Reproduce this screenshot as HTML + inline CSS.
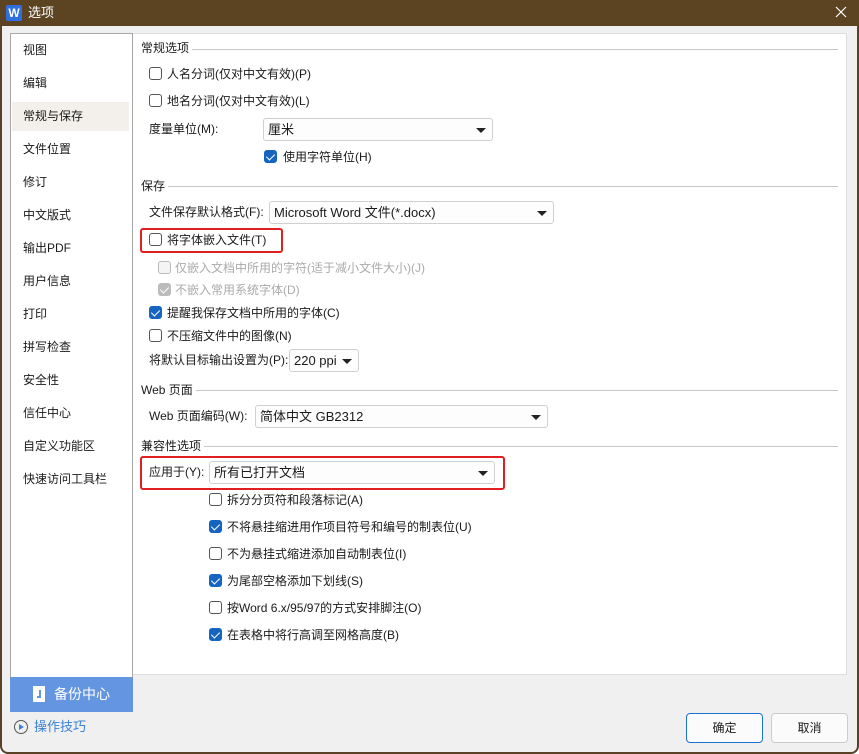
<!DOCTYPE html>
<html><head><meta charset="utf-8"><style>
*{margin:0;padding:0;box-sizing:border-box}
body{width:859px;height:754px;overflow:hidden;background:#fff;font-family:"Liberation Sans","Noto Sans CJK SC",sans-serif;font-size:12px;color:#1a1a1a}
.win{position:absolute;left:0;top:0;width:859px;height:754px;background:#f0f0f0;border:2px solid #5a4226;border-top:none;border-radius:0 0 8px 8px}
.title{position:absolute;left:0;top:0;width:859px;height:26px;background:#5c4423;color:#fff}
.a{position:absolute;white-space:nowrap;line-height:16px}
.h{background:#fff;padding-right:3px;z-index:2}
.cb{position:absolute;width:13px;height:13px;border:1px solid #555;border-radius:3px;background:#fff}
.cb.on{background:#1565c0;border-color:#1565c0}
.cb.on::after,.cb.dison::after{content:"";position:absolute;left:3px;top:1px;width:4px;height:7px;border:solid #fff;border-width:0 1.5px 1.5px 0;transform:rotate(45deg)}
.cb.dis{border-color:#bbb;background:#f4f4f4}
.cb.dison{background:#bcbcbc;border-color:#bcbcbc}
.sel{position:absolute;height:23px;border:1px solid #d0d0d0;border-radius:3px;background:#fdfdfd;padding-left:4px;line-height:21px;font-size:13px}
.sel::after{content:"";position:absolute;right:6px;top:9px;border:5px solid transparent;border-top:5px solid #222;border-bottom:none}
.hd{position:absolute;height:1px;background:#c8c8c8}
.nav{position:absolute;left:23px;line-height:16px}
.red{position:absolute;border:2px solid #e02020;border-radius:3px}
.btn{position:absolute;height:30px;border:1px solid #ccc;border-radius:4px;background:#fbfbfb;text-align:center;line-height:28px}
</style></head><body>
<div class="win"></div>
<div class="title">
 <div style="position:absolute;left:6px;top:5px;width:16px;height:16px;background:#2f6fe0;border-radius:2px;color:#fff;font-weight:bold;font-size:12px;text-align:center;line-height:16px">W</div>
 <div class="a" style="left:28px;top:5px;color:#fff;font-size:13px">选项</div>
 <svg style="position:absolute;left:835px;top:6px" width="12" height="12"><path d="M1 1L11 11M11 1L1 11" stroke="#fff" stroke-width="1.2"/></svg>
</div>
<div style="position:absolute;left:10px;top:33px;width:123px;height:645px;background:#fff;border:1px solid #a8a8a8"></div>
<div style="position:absolute;left:12px;top:102px;width:117px;height:29px;background:#f3f0eb"></div>
<div class="nav" style="top:42px">视图</div>
<div class="nav" style="top:75px">编辑</div>
<div class="nav" style="top:108px">常规与保存</div>
<div class="nav" style="top:141px">文件位置</div>
<div class="nav" style="top:174px">修订</div>
<div class="nav" style="top:207px">中文版式</div>
<div class="nav" style="top:240px">输出PDF</div>
<div class="nav" style="top:273px">用户信息</div>
<div class="nav" style="top:306px">打印</div>
<div class="nav" style="top:339px">拼写检查</div>
<div class="nav" style="top:372px">安全性</div>
<div class="nav" style="top:405px">信任中心</div>
<div class="nav" style="top:438px">自定义功能区</div>
<div class="nav" style="top:471px">快速访问工具栏</div>
<div style="position:absolute;left:10px;top:677px;width:123px;height:35px;background:#6495e0;color:#fff;font-size:14px">
 <div style="position:absolute;left:23px;top:9px;width:12px;height:16px;background:#fff"></div>
 <div style="position:absolute;left:27px;top:13px;width:4px;height:8px;border:solid #6495e0;border-width:0 2px 2px 0"></div>
 <div class="a" style="left:44px;top:9px">备份中心</div>
</div>
<div style="position:absolute;left:14px;top:720px;width:14px;height:14px;border:1px solid #555;border-radius:50%"></div>
<div style="position:absolute;left:19px;top:724px;border:3px solid transparent;border-left:5px solid #3b82d6;border-right:none"></div>
<div class="a" style="left:34px;top:719px;color:#3b82d6;font-size:13px">操作技巧</div>
<div style="position:absolute;left:133px;top:33px;width:714px;height:642px;background:#fff;border:1px solid #ddd;border-left:none"></div>
<div class="hd" style="left:141px;top:49px;width:697px"></div><div class="a h" style="left:141px;top:40px">常规选项</div>
<div class="cb" style="left:149px;top:67px"></div><div class="a" style="left:167px;top:66px">人名分词(仅对中文有效)(P)</div>
<div class="cb" style="left:149px;top:94px"></div><div class="a" style="left:167px;top:93px">地名分词(仅对中文有效)(L)</div>
<div class="a" style="left:149px;top:121px">度量单位(M):</div><div class="sel" style="left:263px;top:118px;width:230px">厘米</div>
<div class="cb on" style="left:264px;top:150px"></div><div class="a" style="left:283px;top:149px">使用字符单位(H)</div>
<div class="hd" style="left:141px;top:186px;width:697px"></div><div class="a h" style="left:141px;top:178px">保存</div>
<div class="a" style="left:149px;top:204px">文件保存默认格式(F):</div><div class="sel" style="left:269px;top:201px;width:285px">Microsoft Word 文件(*.docx)</div>
<div class="red" style="left:140px;top:228px;width:143px;height:25px"></div>
<div class="cb" style="left:149px;top:233px"></div><div class="a" style="left:167px;top:232px">将字体嵌入文件(T)</div>
<div class="cb dis" style="left:158px;top:261px"></div><div class="a" style="left:175px;top:260px;color:#aaa">仅嵌入文档中所用的字符(适于减小文件大小)(J)</div>
<div class="cb dison" style="left:158px;top:283px"></div><div class="a" style="left:175px;top:282px;color:#aaa">不嵌入常用系统字体(D)</div>
<div class="cb on" style="left:149px;top:306px"></div><div class="a" style="left:167px;top:305px">提醒我保存文档中所用的字体(C)</div>
<div class="cb" style="left:149px;top:329px"></div><div class="a" style="left:167px;top:328px">不压缩文件中的图像(N)</div>
<div class="a" style="left:149px;top:352px">将默认目标输出设置为(P):</div><div class="sel" style="left:289px;top:349px;width:70px">220 ppi</div>
<div class="hd" style="left:141px;top:390px;width:697px"></div><div class="a h" style="left:141px;top:382px">Web 页面</div>
<div class="a" style="left:149px;top:408px">Web 页面编码(W):</div><div class="sel" style="left:255px;top:405px;width:293px">简体中文 GB2312</div>
<div class="hd" style="left:141px;top:446px;width:697px"></div><div class="a h" style="left:141px;top:438px">兼容性选项</div>
<div class="red" style="left:140px;top:456px;width:365px;height:34px"></div>
<div class="a" style="left:149px;top:464px">应用于(Y):</div><div class="sel" style="left:209px;top:461px;width:286px">所有已打开文档</div>
<div class="cb" style="left:209px;top:493px"></div><div class="a" style="left:227px;top:492px">拆分分页符和段落标记(A)</div>
<div class="cb on" style="left:209px;top:520px"></div><div class="a" style="left:227px;top:519px">不将悬挂缩进用作项目符号和编号的制表位(U)</div>
<div class="cb" style="left:209px;top:547px"></div><div class="a" style="left:227px;top:546px">不为悬挂式缩进添加自动制表位(I)</div>
<div class="cb on" style="left:209px;top:574px"></div><div class="a" style="left:227px;top:573px">为尾部空格添加下划线(S)</div>
<div class="cb" style="left:209px;top:601px"></div><div class="a" style="left:227px;top:600px">按Word 6.x/95/97的方式安排脚注(O)</div>
<div class="cb on" style="left:209px;top:628px"></div><div class="a" style="left:227px;top:627px">在表格中将行高调至网格高度(B)</div>
<div class="btn" style="left:686px;top:713px;width:77px;border-color:#1a73d0">确定</div>
<div class="btn" style="left:771px;top:713px;width:77px">取消</div>
</body></html>
